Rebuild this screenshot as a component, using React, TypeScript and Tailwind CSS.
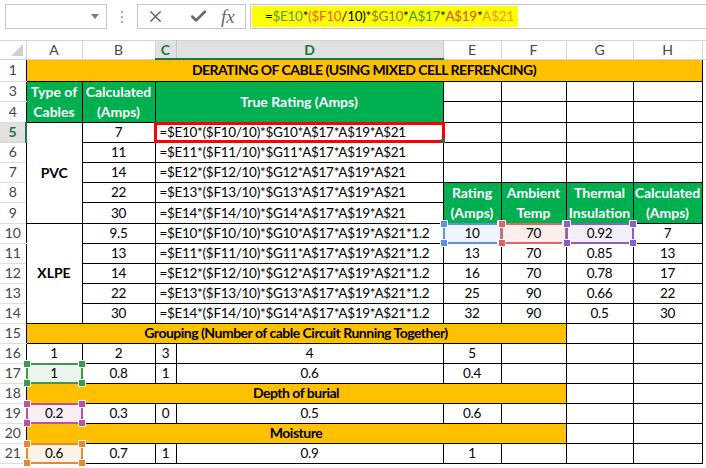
import { X, Check } from "lucide-react";

const cols = ["A", "B", "C", "D", "E", "F", "G", "H"];

const pvc = [7, 11, 14, 22, 30];
const xlpe = ["9.5", "13", "14", "22", "30"];
const side = [
  ["10", "70", "0.92", "7"],
  ["13", "70", "0.85", "13"],
  ["16", "70", "0.78", "17"],
  ["25", "90", "0.66", "22"],
  ["32", "90", "0.5", "30"],
];

type Tone = { line: string; dot: string; fill: string };

const tones: Record<string, Tone> = {
  blue: { line: "border-[#5f8fe6]", dot: "bg-[#5f8fe6]", fill: "bg-[#eef3fc]" },
  red: { line: "border-[#e26464]", dot: "bg-[#e26464]", fill: "bg-[#fdeeee]" },
  purple: { line: "border-[#8d5fc6]", dot: "bg-[#8d5fc6]", fill: "bg-[#f3eff9]" },
  green: { line: "border-[#3c9b48]", dot: "bg-[#3c9b48]", fill: "bg-[#ecf5ec]" },
  pink: { line: "border-[#c2509a]", dot: "bg-[#c2509a]", fill: "bg-[#f9eef6]" },
  orange: { line: "border-[#e68a2e]", dot: "bg-[#e68a2e]", fill: "bg-[#fcf2e8]" },
};

// coloured range box drawn over a referenced cell
const Mark = ({ tone }: { tone: Tone }) => (
  <div className={`absolute -inset-[1px] border-2 ${tone.line} pointer-events-none`}>
    <span className={`absolute -left-[4px] -top-[4px] w-[6px] h-[6px] ${tone.dot} outline outline-1 outline-white`} />
    <span className={`absolute -right-[4px] -top-[4px] w-[6px] h-[6px] ${tone.dot} outline outline-1 outline-white`} />
    <span className={`absolute -left-[4px] -bottom-[4px] w-[6px] h-[6px] ${tone.dot} outline outline-1 outline-white`} />
    <span className={`absolute -right-[4px] -bottom-[4px] w-[6px] h-[6px] ${tone.dot} outline outline-1 outline-white`} />
  </div>
);

const RowHead = ({ n, active }: { n?: number; active?: boolean }) =>
  active ? (
    <th className="bg-[#e1e1e1] border-r-2 border-r-[#217346] border-b border-b-[#d4d4d4] text-[#217346] font-bold text-[14px] tracking-normal leading-[18px] p-0">
      {n}
    </th>
  ) : (
    <th className="bg-white border-b border-[#dcdcdc] text-[#444] font-normal text-[14px] tracking-normal leading-[18px] p-0">
      {n}
    </th>
  );

const td = "border border-black p-0 leading-[18px] whitespace-nowrap";
const num = `${td} text-center`;
const band = `${td} bg-[#ffc000] font-bold text-[14px] tracking-[-0.5px] text-center`;
const green =
  "border border-black p-0 bg-[#00b050] text-white font-bold text-[14px] tracking-normal text-center leading-[20px] whitespace-nowrap";

const formula = (r: number, extra = "") =>
  `=$E${r}*($F${r}/10)*$G${r}*A$17*A$19*A$21${extra}`;

export default function App() {
  return (
    <div className="w-[706px] h-[468px] overflow-hidden bg-white text-black font-['Lato','Liberation_Sans',sans-serif]">
      {/* formula bar */}
      <div className="h-[40px] flex items-start pt-[4px] pl-[5px]">
        <div className="w-[102px] h-[25px] border border-[#c6c6c6] flex items-center justify-end pr-[7px]">
          <svg width="8" height="5" viewBox="0 0 8 5">
            <path d="M0 0h8L4 5z" fill="#7a7a7a" />
          </svg>
        </div>
        <div className="w-[30px] h-[25px] flex flex-col items-center justify-center gap-[3px]">
          <span className="w-[2px] h-[2px] bg-[#a8a8a8]" />
          <span className="w-[2px] h-[2px] bg-[#a8a8a8]" />
          <span className="w-[2px] h-[2px] bg-[#a8a8a8]" />
        </div>
        <div className="w-[109px] h-[25px] border border-[#c6c6c6] flex items-center text-[#555]">
          <X className="ml-[8px]" size={19} strokeWidth={1.6} />
          <Check className="ml-[24px]" size={19} strokeWidth={3.2} color="#666" />
          <span className="ml-[13px] font-['Liberation_Serif',serif] italic text-[19px] leading-none text-[#666]">
            fx
          </span>
        </div>
        <div className="flex-1 h-[25px] ml-[4px] border-y border-l border-[#c6c6c6] pl-px py-px">
          <div className="w-[266px] h-full bg-[#ffff00] pl-[13px] flex items-center text-[13.5px] tracking-[-0.3px] leading-none whitespace-nowrap">
            <span>=</span>
            <span className="text-[#5d9a2c]">$E10</span>
            <span>*</span>
            <span className="text-[#e8641c]">(</span>
            <span className="text-[#e8641c]">$F10</span>
            <span>/10)*</span>
            <span className="text-[#8a7b22]">$G10</span>
            <span>*</span>
            <span className="text-[#3d9a1e]">A$17</span>
            <span>*</span>
            <span className="text-[#d6501c]">A$19</span>
            <span>*</span>
            <span className="text-[#e99a16]">A$21</span>
          </div>
        </div>
      </div>

      {/* sheet */}
      <table className="table-fixed border-collapse w-[706px] text-[13.5px] tracking-[-0.3px]">
        <colgroup>
          <col className="w-[26px]" />
          <col className="w-[56px]" />
          <col className="w-[73px]" />
          <col className="w-[21px]" />
          <col className="w-[267px]" />
          <col className="w-[58px]" />
          <col className="w-[65px]" />
          <col className="w-[67px]" />
          <col className="w-[69px]" />
          <col className="w-[4px]" />
        </colgroup>
        <thead>
          <tr className="h-[17px]">
            <th className="relative bg-white border-t border-b border-r border-[#d4d4d4] p-0">
              <svg className="absolute right-[3px] bottom-[3px]" width="12" height="12" viewBox="0 0 12 12">
                <path d="M12 0v12H0z" fill="#d0d0d0" />
              </svg>
            </th>
            {cols.map((c) =>
              c === "C" || c === "D" ? (
                <th
                  key={c}
                  className="bg-[#e1e1e1] border-t border-t-[#d4d4d4] border-r border-r-[#c6c6c6] border-b-2 border-b-[#217346] text-[#217346] font-bold text-[14px] tracking-normal leading-[17px] p-0"
                >
                  {c}
                </th>
              ) : (
                <th
                  key={c}
                  className="bg-white border-t border-b border-r border-[#d4d4d4] text-[#444] font-normal text-[14px] tracking-normal leading-[17px] p-0"
                >
                  {c}
                </th>
              )
            )}
            <th className="bg-white border-t border-b border-[#d4d4d4] p-0" />
          </tr>
        </thead>
        <tbody>
          <tr className="h-[22px]">
            <RowHead n={1} />
            <td colSpan={8} className={band}>
              DERATING OF CABLE (USING MIXED CELL REFRENCING)
            </td>
            <td />
          </tr>
          <tr className="h-[20px]">
            <RowHead n={3} />
            <td rowSpan={2} className={green}>
              Type of
              <br />
              Cables
            </td>
            <td rowSpan={2} className={green}>
              Calculated
              <br />
              (Amps)
            </td>
            <td rowSpan={2} colSpan={2} className={green}>
              True Rating (Amps)
            </td>
            <td className={td} />
            <td className={td} />
            <td className={td} />
            <td className={td} />
            <td />
          </tr>
          <tr className="h-[20px]">
            <RowHead n={4} />
            <td className={td} />
            <td className={td} />
            <td className={td} />
            <td className={td} />
            <td />
          </tr>
          {pvc.map((v, i) => (
            <tr key={`p${i}`} className="h-[20px]">
              <RowHead n={5 + i} active={i === 0} />
              {i === 0 && (
                <td rowSpan={5} className={`${num} font-bold text-[14px] tracking-normal`}>
                  PVC
                </td>
              )}
              <td className={num}>{v}</td>
              <td colSpan={2} className={`${td} relative pl-[4px]`}>
                {formula(10 + i)}
                {i === 0 && (
                  <div className="absolute -left-[2px] -top-[1px] -right-[2px] -bottom-[1px] border-[3px] border-[#ff0000]">
                    <span className="absolute -right-[3px] -bottom-[3px] w-[4px] h-[4px] bg-[#217346]" />
                  </div>
                )}
              </td>
              {i < 3 ? (
                <>
                  <td className={td} />
                  <td className={td} />
                  <td className={td} />
                  <td className={td} />
                </>
              ) : (
                i === 3 && (
                  <>
                    <td rowSpan={2} className={green}>
                      Rating
                      <br />
                      (Amps)
                    </td>
                    <td rowSpan={2} className={green}>
                      Ambient
                      <br />
                      Temp
                    </td>
                    <td rowSpan={2} className={`${green} tracking-[-0.3px]`}>
                      Thermal
                      <br />
                      Insulation
                    </td>
                    <td rowSpan={2} className={`${green} tracking-[-0.3px]`}>
                      Calculated
                      <br />
                      (Amps)
                    </td>
                  </>
                )
              )}
              <td />
            </tr>
          ))}
          {xlpe.map((v, i) => (
            <tr key={`x${i}`} className="h-[20px]">
              <RowHead n={10 + i} />
              {i === 0 && (
                <td rowSpan={5} className={`${num} font-bold text-[14px] tracking-normal`}>
                  XLPE
                </td>
              )}
              <td className={num}>{v}</td>
              <td colSpan={2} className={`${td} pl-[4px]`}>
                {formula(10 + i, "*1.2")}
              </td>
              {side[i].map((s, j) => {
                const t = i === 0 ? [tones.blue, tones.red, tones.purple][j] : undefined;
                return (
                  <td key={j} className={`${num} ${t ? `relative ${t.fill}` : ""}`}>
                    {s}
                    {t && <Mark tone={t} />}
                  </td>
                );
              })}
              <td />
            </tr>
          ))}
          <tr className="h-[20px]">
            <RowHead n={15} />
            <td colSpan={6} className={band}>
              Grouping (Number of cable Circuit Running Together)
            </td>
            <td className={td} />
            <td className={td} />
            <td />
          </tr>
          <tr className="h-[20px]">
            <RowHead n={16} />
            <td className={num}>1</td>
            <td className={num}>2</td>
            <td className={num}>3</td>
            <td className={num}>4</td>
            <td className={num}>5</td>
            <td className={td} />
            <td className={td} />
            <td className={td} />
            <td />
          </tr>
          {[
            { n: 17, tone: tones.green, v: ["1", "0.8", "1", "0.6", "0.4"] },
            { n: 18, title: "Depth of burial" },
            { n: 19, tone: tones.pink, v: ["0.2", "0.3", "0", "0.5", "0.6"] },
            { n: 20, title: "Moisture" },
            { n: 21, tone: tones.orange, v: ["0.6", "0.7", "1", "0.9", "1"] },
          ].map((r) => (
            <tr key={r.n} className="h-[20px]">
              <RowHead n={r.n} />
              {r.title ? (
                <td colSpan={6} className={band}>
                  {r.title}
                </td>
              ) : (
                <>
                  {r.v!.map((s, j) => (
                    <td key={j} className={`${num} ${j === 0 ? `relative ${r.tone!.fill}` : ""}`}>
                      {s}
                      {j === 0 && <Mark tone={r.tone!} />}
                    </td>
                  ))}
                  <td className={td} />
                </>
              )}
              <td className={td} />
              <td className={td} />
              <td />
            </tr>
          ))}
          <tr className="h-[20px]">
            <RowHead />
            <td colSpan={9} />
          </tr>
        </tbody>
      </table>
    </div>
  );
}
